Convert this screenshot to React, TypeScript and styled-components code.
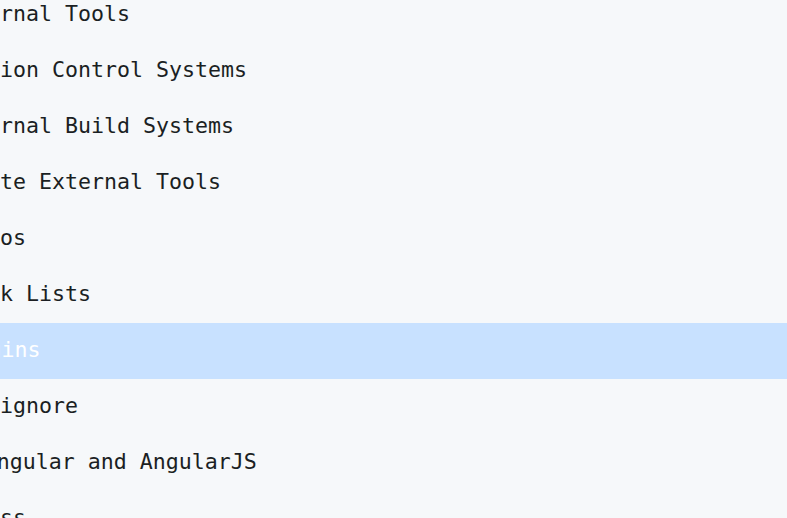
import React from 'react'
import styled, { createGlobalStyle } from 'styled-components'

const GlobalStyle = createGlobalStyle`
  html, body {
    margin: 0;
    padding: 0;
    background: #f6f8fa;
    overflow: hidden;
  }
`

const Viewport = styled.div`
  width: 787px;
  height: 518px;
  overflow: hidden;
  background: #f6f8fa;
`

const List = styled.ul`
  list-style: none;
  margin: -13px 0 0 0;
  padding: 0;
`

const Row = styled.li<{ $active?: boolean }>`
  box-sizing: border-box;
  height: 56px;
  padding-bottom: 4px;
  display: flex;
  align-items: center;
  overflow: hidden;
  white-space: nowrap;
  background: ${({ $active }) => ($active ? '#c8e1ff' : 'transparent')};
  color: ${({ $active }) => ($active ? '#ffffff' : '#1b1f23')};
  font-family: 'DejaVu Sans Mono', 'Liberation Mono', monospace;
  font-size: 21.6px;
`

// shift = how many leading characters are scrolled out of view
const Label = styled.span<{ $shift: number }>`
  margin-left: ${({ $shift }) => `${-$shift * 13}px`};
`

const items: { name: string; shift: number }[] = [
  { name: 'External Tools', shift: 4 },
  { name: 'Version Control Systems', shift: 4 },
  { name: 'External Build Systems', shift: 4 },
  { name: 'Remote External Tools', shift: 4 },
  { name: 'Videos', shift: 4 },
  { name: 'Task Lists', shift: 3 },
  { name: 'Plugins', shift: 3.88 },
  { name: '.gitignore', shift: 4 },
  { name: 'Angular and AngularJS', shift: 1.25 },
  { name: 'Sass', shift: 2 },
]

const App: React.FC = () => {
  return (
    <Viewport>
      <GlobalStyle />
      <List>
        {items.map((item) => (
          <Row key={item.name} $active={item.name === 'Plugins'}>
            <Label $shift={item.shift}>{item.name}</Label>
          </Row>
        ))}
      </List>
    </Viewport>
  )
}

export default App
